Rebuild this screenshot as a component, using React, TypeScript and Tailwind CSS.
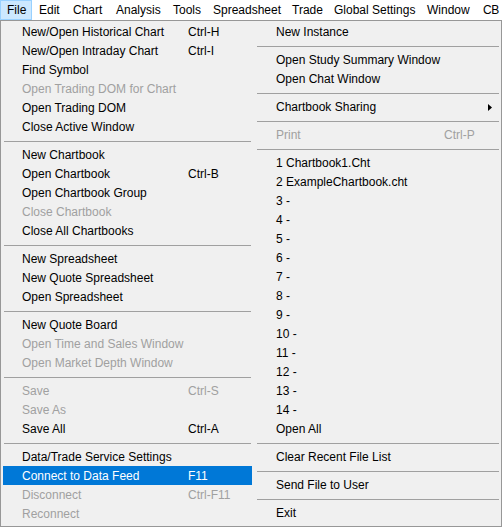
import React from 'react';

type Item = { label?: string; key?: string; disabled?: boolean; active?: boolean; sub?: boolean; sep?: boolean };

const leftItems: Item[] = [
  { label: 'New/Open Historical Chart', key: 'Ctrl-H' },
  { label: 'New/Open Intraday Chart', key: 'Ctrl-I' },
  { label: 'Find Symbol' },
  { label: 'Open Trading DOM for Chart', disabled: true },
  { label: 'Open Trading DOM' },
  { label: 'Close Active Window' },
  { sep: true },
  { label: 'New Chartbook' },
  { label: 'Open Chartbook', key: 'Ctrl-B' },
  { label: 'Open Chartbook Group' },
  { label: 'Close Chartbook', disabled: true },
  { label: 'Close All Chartbooks' },
  { sep: true },
  { label: 'New Spreadsheet' },
  { label: 'New Quote Spreadsheet' },
  { label: 'Open Spreadsheet' },
  { sep: true },
  { label: 'New Quote Board' },
  { label: 'Open Time and Sales Window', disabled: true },
  { label: 'Open Market Depth Window', disabled: true },
  { sep: true },
  { label: 'Save', key: 'Ctrl-S', disabled: true },
  { label: 'Save As', disabled: true },
  { label: 'Save All', key: 'Ctrl-A' },
  { sep: true },
  { label: 'Data/Trade Service Settings' },
  { label: 'Connect to Data Feed', key: 'F11', active: true },
  { label: 'Disconnect', key: 'Ctrl-F11', disabled: true },
  { label: 'Reconnect', disabled: true },
];

const rightItems: Item[] = [
  { label: 'New Instance' },
  { sep: true },
  { label: 'Open Study Summary Window' },
  { label: 'Open Chat Window' },
  { sep: true },
  { label: 'Chartbook Sharing', sub: true },
  { sep: true },
  { label: 'Print', key: 'Ctrl-P', disabled: true },
  { sep: true },
  { label: '1 Chartbook1.Cht' },
  { label: '2 ExampleChartbook.cht' },
  ...Array.from({ length: 12 }, (_, i) => ({ label: `${i + 3} -` })),
  { label: 'Open All' },
  { sep: true },
  { label: 'Clear Recent File List' },
  { sep: true },
  { label: 'Send File to User' },
  { sep: true },
  { label: 'Exit' },
];

// menu bar: label, box width, left padding (taken from the screenshot)
const menus: [string, string][] = [
  ['File', 'w-[32px] pl-[6px]'],
  ['Edit', 'w-[34px] pl-[6px]'],
  ['Chart', 'w-[43px] pl-[6px]'],
  ['Analysis', 'w-[57px] pl-[6px]'],
  ['Tools', 'w-[40px] pl-[6px]'],
  ['Spreadsheet', 'w-[79px] pl-[6px]'],
  ['Trade', 'w-[42px] pl-[6px]'],
  ['Global Settings', 'w-[93px] pl-[6px]'],
  ['Window', 'w-[56px] pl-[6px]'],
  ['CB', 'w-[27px] pl-[6px] tracking-[-0.5px]'],
];

const Column = ({ items, labelW, padL }: { items: Item[]; labelW: string; padL: string }) => (
  <div className="flex flex-col">
    {items.map((it, i) =>
      it.sep ? (
        <div key={i} className="h-[9px] flex items-center px-[1px] pt-px">
          <div className="h-px w-full bg-[#a0a0a0]" />
        </div>
      ) : (
        <div
          key={i}
          className={`h-[19px] pt-[1px] flex items-center whitespace-nowrap ${padL} ${
            it.active ? 'bg-[#0078d7] text-white' : it.disabled ? 'text-[#a0a0a0]' : 'text-black'
          }`}
        >
          <span className={labelW}>{it.label}</span>
          {it.key && <span>{it.key}</span>}
          {it.sub && (
            <svg className="ml-auto mr-[8px]" width="4" height="7" viewBox="0 0 4 7">
              <path d="M0 0 L4 3.5 L0 7 Z" fill="#000" />
            </svg>
          )}
        </div>
      )
    )}
  </div>
);

export default function App() {
  return (
    <div className="w-[503px] h-[527px] bg-white overflow-hidden text-[12px] font-['Segoe_UI','Liberation_Sans',Arial,sans-serif]">
      <div className="h-[20px] flex items-stretch text-black">
        {menus.map(([m, w], i) => (
          <div
            key={m}
            className={`${w} shrink-0 pt-[1px] leading-[17px] whitespace-nowrap border ${
              i === 0 ? 'bg-[#cce8ff] border-[#99d1ff]' : 'border-transparent'
            }`}
          >
            {m}
          </div>
        ))}
      </div>
      <div className="w-[502px] h-[507px] bg-[#f0f0f0] border border-[#979797] pl-[2px] pt-[1px] flex gap-[4px]">
        <div className="w-[249px]">
          <Column items={leftItems} labelW="w-[166px]" padL="pl-[19px]" />
        </div>
        <div className="w-[244px]">
          <Column items={rightItems} labelW="w-[168px]" padL="pl-[20px]" />
        </div>
      </div>
    </div>
  );
}
